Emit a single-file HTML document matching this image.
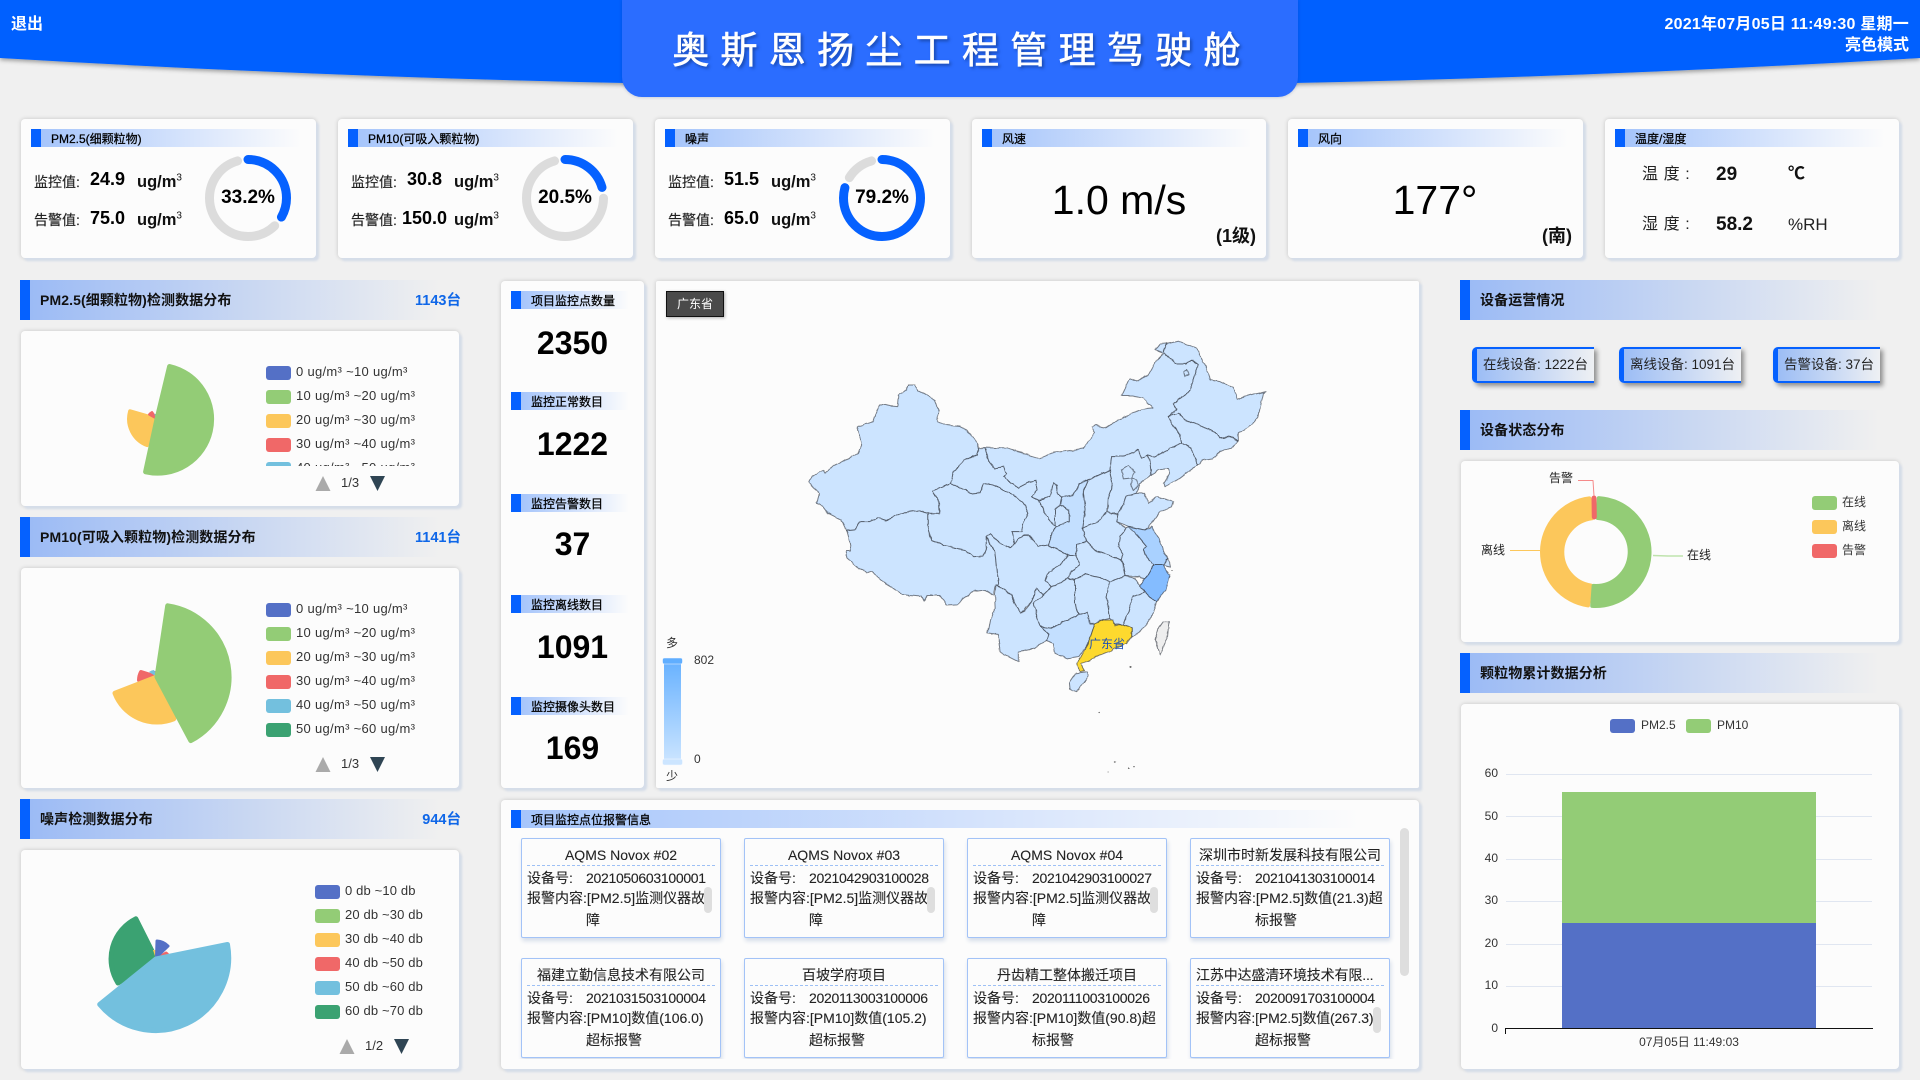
<!DOCTYPE html>
<html lang="zh">
<head>
<meta charset="utf-8">
<title>奥斯恩扬尘工程管理驾驶舱</title>
<style>
html,body{margin:0;padding:0;width:1920px;height:1080px;overflow:hidden;background:#f0f0f0}
body{position:relative;font-family:"Liberation Sans","Noto Sans CJK SC",sans-serif;color:#111}
div,span{box-sizing:border-box}
.t{position:absolute;white-space:nowrap;line-height:20px;height:20px}
.card{position:absolute;background:#fcfcfc;border-radius:4px;box-shadow:3px 3px 2px #d5dde9,0 0 4px rgba(0,0,0,.18)}
.ct{position:absolute;height:18px;border-left:10px solid #0561ff;background:linear-gradient(90deg,#a6c5fb,#fcfcfc);font-size:12px;line-height:20px;padding-left:10px;white-space:nowrap;color:#000;-webkit-text-stroke:.25px #000}
.sec{position:absolute;height:40px;width:420px;border-left:10px solid #0561ff;background:linear-gradient(90deg,#9cbbf5,#f0f0f0);font-size:14px;font-weight:bold;line-height:40px;padding-left:10px;color:#111;white-space:nowrap;letter-spacing:.1px}
.cnt{position:absolute;width:80px;text-align:right;font-size:14.5px;font-weight:bold;color:#0f67e8;line-height:42px;height:40px;white-space:nowrap}
.lb{font-size:14px;color:#222;-webkit-text-stroke:.15px #222}
.v{font-size:18px;font-weight:bold;color:#000}
.u{font-size:16.5px;font-weight:bold;color:#111}
.u sup{font-size:10px;line-height:0;font-weight:normal}
.pct{position:absolute;width:80px;text-align:center;font-size:19px;font-weight:bold;line-height:20px;color:#000}
.sw{position:absolute;width:25px;height:14px;border-radius:3px}
.lg{position:absolute;font-size:12px;line-height:14px;color:#333;white-space:nowrap}
.ls{font-size:13px;letter-spacing:.3px}
.ld{font-size:13px;letter-spacing:.15px}
.big{position:absolute;left:501px;width:143px;text-align:center;font-size:32px;font-weight:bold;line-height:36px;color:#000}
.chip{position:absolute;height:36px;top:347px;border:solid #0561ff;border-width:2px 0 2px 5px;border-radius:5px 0 0 5px;background:linear-gradient(90deg,#9cbdf5,#eef0f3);box-shadow:3px 3px 5px #8f8f8f;font-size:13.5px;line-height:32px;text-align:center;white-space:nowrap;color:#222}
.it{position:absolute;width:200px;height:100px;background:#fcfcfc;border:1px solid #a3c3f7;border-radius:2px;box-shadow:1px 3px 4px #d5dde9;font-size:14px;color:#222;-webkit-text-stroke:.1px #222}
.it .h{position:absolute;left:5px;right:5px;top:6px;height:21px;line-height:21px;text-align:center;border-bottom:1px dashed #9dc0f5;white-space:nowrap;overflow:hidden}
.it .a{position:absolute;white-space:nowrap;line-height:20px;height:20px}
.it .n{letter-spacing:-.3px}
.it .sb{position:absolute;width:8px;height:26px;left:182px;top:48px;background:#dedede;border-radius:4px}
</style>
</head>
<body>

<!-- header -->
<svg style="position:absolute;left:0;top:0" width="1920" height="110">
<defs><filter id="hs" x="-2%" y="-10%" width="104%" height="130%"><feDropShadow dx="0" dy="2" stdDeviation="2" flood-color="#000" flood-opacity=".35"/></filter></defs>
<path d="M0 0H1920V58Q960 115 0 58Z" fill="#0561ff" filter="url(#hs)"/>
</svg>
<div style="position:absolute;left:622px;top:0;width:676px;height:97px;background:#2b6dff;border-radius:0 0 20px 20px;box-shadow:0 0 3px rgba(0,40,120,.25)"></div>
<div style="position:absolute;left:622px;top:1px;width:676px;height:97px;text-align:center;font-size:37px;line-height:100px;letter-spacing:11.3px;color:#fff;text-shadow:2px 2px 3px #16429f;white-space:nowrap;padding-left:4px;-webkit-text-stroke:.6px #fff">奥斯恩扬尘工程管理驾驶舱</div>
<div class="t" style="left:11px;top:15px;font-size:16px;font-weight:bold;color:#fff">退出</div>
<div class="t" style="right:11px;top:15px;font-size:16px;font-weight:bold;color:#fff;letter-spacing:.22px">2021年07月05日 11:49:30 星期一</div>
<div class="t" style="right:11px;top:36px;font-size:16px;font-weight:bold;color:#fff">亮色模式</div>

<!-- top cards -->
<div class="card" style="left:21px;top:119px;width:295px;height:139px"></div>
<div class="card" style="left:338px;top:119px;width:295px;height:139px"></div>
<div class="card" style="left:655px;top:119px;width:295px;height:139px"></div>
<div class="card" style="left:972px;top:119px;width:294px;height:139px"></div>
<div class="card" style="left:1288px;top:119px;width:295px;height:139px"></div>
<div class="card" style="left:1605px;top:119px;width:294px;height:139px"></div>

<div class="ct" style="left:31px;top:129px;width:270px">PM2.5(细颗粒物)</div>
<div class="ct" style="left:348px;top:129px;width:270px">PM10(可吸入颗粒物)</div>
<div class="ct" style="left:665px;top:129px;width:270px">噪声</div>
<div class="ct" style="left:982px;top:129px;width:270px">风速</div>
<div class="ct" style="left:1298px;top:129px;width:270px">风向</div>
<div class="ct" style="left:1615px;top:129px;width:270px">温度/湿度</div>

<div class="t lb" style="left:34px;top:172px">监控值:</div>
<div class="t v" style="left:90px;top:169px">24.9</div>
<div class="t u" style="left:137px;top:172px">ug/m<sup>3</sup></div>
<div class="t lb" style="left:34px;top:210px">告警值:</div>
<div class="t v" style="left:90px;top:208px">75.0</div>
<div class="t u" style="left:137px;top:210px">ug/m<sup>3</sup></div>

<div class="t lb" style="left:351px;top:172px">监控值:</div>
<div class="t v" style="left:407px;top:169px">30.8</div>
<div class="t u" style="left:454px;top:172px">ug/m<sup>3</sup></div>
<div class="t lb" style="left:351px;top:210px">告警值:</div>
<div class="t v" style="left:402px;top:208px">150.0</div>
<div class="t u" style="left:454px;top:210px">ug/m<sup>3</sup></div>

<div class="t lb" style="left:668px;top:172px">监控值:</div>
<div class="t v" style="left:724px;top:169px">51.5</div>
<div class="t u" style="left:771px;top:172px">ug/m<sup>3</sup></div>
<div class="t lb" style="left:668px;top:210px">告警值:</div>
<div class="t v" style="left:724px;top:208px">65.0</div>
<div class="t u" style="left:771px;top:210px">ug/m<sup>3</sup></div>

<svg style="position:absolute;left:0;top:0" width="1000" height="270" fill="none" stroke-width="9" stroke-linecap="round">
<g transform="rotate(-90 248 198)">
<circle cx="248" cy="198" r="38.5" stroke="#dcdcdc" stroke-dasharray="139.6 300" stroke-dashoffset="-91.3"/>
<circle cx="248" cy="198" r="38.5" stroke="#0561ff" stroke-dasharray="80.3 300"/>
</g>
<g transform="rotate(-90 565 198)">
<circle cx="565" cy="198" r="38.5" stroke="#dcdcdc" stroke-dasharray="170.3 300" stroke-dashoffset="-60.6"/>
<circle cx="565" cy="198" r="38.5" stroke="#0561ff" stroke-dasharray="49.6 300"/>
</g>
<g transform="rotate(-90 882 198)">
<circle cx="882" cy="198" r="38.5" stroke="#dcdcdc" stroke-dasharray="28.3 300" stroke-dashoffset="-202.6"/>
<circle cx="882" cy="198" r="38.5" stroke="#0561ff" stroke-dasharray="191.6 300"/>
</g>
</svg>
<div class="pct" style="left:208px;top:188px">33.2%</div>
<div class="pct" style="left:525px;top:188px">20.5%</div>
<div class="pct" style="left:842px;top:188px">79.2%</div>

<div style="position:absolute;left:972px;width:294px;top:176px;text-align:center;font-size:41px;line-height:48px;color:#000">1.0 m/s</div>
<div class="t" style="right:664px;top:226px;font-size:18px;font-weight:bold">(1级)</div>
<div style="position:absolute;left:1288px;width:294px;top:176px;text-align:center;font-size:41px;line-height:48px;color:#000">177°</div>
<div class="t" style="right:348px;top:226px;font-size:18px;font-weight:bold">(南)</div>

<div class="t" style="left:1642px;top:165px;font-size:16px;letter-spacing:.6px;color:#222">温 度 :</div>
<div class="t" style="left:1716px;top:165px;font-size:19px;font-weight:bold">29</div>
<div class="t" style="left:1788px;top:164px;font-size:17px;font-weight:bold">℃</div>
<div class="t" style="left:1642px;top:215px;font-size:16px;letter-spacing:.6px;color:#222">湿 度 :</div>
<div class="t" style="left:1716px;top:215px;font-size:19px;font-weight:bold">58.2</div>
<div class="t" style="left:1788px;top:215px;font-size:17px;color:#222">%RH</div>

<!-- left column -->
<div class="sec" style="left:20px;top:280px">PM2.5(细颗粒物)检测数据分布</div>
<div class="cnt" style="left:381px;top:280px">1143台</div>
<div class="card" style="left:21px;top:331px;width:438px;height:175px"></div>

<div class="sec" style="left:20px;top:517px">PM10(可吸入颗粒物)检测数据分布</div>
<div class="cnt" style="left:381px;top:517px">1141台</div>
<div class="card" style="left:21px;top:568px;width:438px;height:220px"></div>

<div class="sec" style="left:20px;top:799px">噪声检测数据分布</div>
<div class="cnt" style="left:381px;top:799px">944台</div>
<div class="card" style="left:21px;top:850px;width:438px;height:219px"></div>

<svg style="position:absolute;left:0;top:330px" width="470" height="750" viewBox="0 330 470 750" stroke-linejoin="round">
<!-- pie 1 -->
<path d="M157 419L147 445A28 28 0 0 1 130.1 411.3Z" fill="#fcc75b" stroke="#fcc75b" stroke-width="4"/>
<path d="M157 419L149 414.5A9 9 0 0 1 152 412Z" fill="#f06868" stroke="#f06868" stroke-width="2"/>
<path d="M157 419L154 414L157 414Z" fill="#8fa0c8"/>
<path d="M157 419L169.6 366.5A54 54 0 0 1 145.6 471.8Z" fill="#93cc76" stroke="#93cc76" stroke-width="5"/>
<!-- pie 2 -->
<path d="M157 677L139 680A18 18 0 0 1 141 672Z" fill="#f06868" stroke="#f06868" stroke-width="4"/>
<path d="M157 677L149 672A10 10 0 0 1 154 670Z" fill="#73c0de"/>
<path d="M157 677L154 671L157 671Z" fill="#8fa0c8"/>
<path d="M157 677L173.8 718.8A45 45 0 0 1 115 693.2Z" fill="#fcc75b" stroke="#fcc75b" stroke-width="5"/>
<path d="M157 677L167.7 605.8A72 72 0 0 1 190.8 740.6Z" fill="#93cc76" stroke="#93cc76" stroke-width="5"/>
<!-- pie 3 -->
<path d="M156 959L118 983A45 45 0 0 1 135.8 918.8Z" fill="#3ba272" stroke="#3ba272" stroke-width="5"/>
<path d="M156 959L153 950L156 950Z" fill="#fcc75b"/>
<path d="M156 959L166 953A10 10 0 0 1 168 955Z" fill="#f06868" stroke="#f06868" stroke-width="3"/>
<path d="M156.5 957L157 941A17 17 0 0 1 168 946Z" fill="#5470c6" stroke="#5470c6" stroke-width="3"/>
<path d="M156 959L227.5 944.5A73 73 0 0 1 99.7 1004.4Z" fill="#73c0de" stroke="#73c0de" stroke-width="5"/>
<!-- pagers -->
<path d="M323 476L330.5 491H315.5Z" fill="#aaa"/><path d="M370 476H385L377.5 491Z" fill="#2f4554"/>
<path d="M323 757L330.5 772H315.5Z" fill="#aaa"/><path d="M370 757H385L377.5 772Z" fill="#2f4554"/>
<path d="M347 1039L354.5 1054H339.5Z" fill="#aaa"/><path d="M394 1039H409L401.5 1054Z" fill="#2f4554"/>
</svg>

<!-- legend 1 (clipped) -->
<div style="position:absolute;left:266px;top:366px;width:170px;height:100px;overflow:hidden">
<div class="sw" style="left:0;top:0;background:#5470c6"></div><div class="lg ls" style="left:30px;top:-1px">0 ug/m³ ~10 ug/m³</div>
<div class="sw" style="left:0;top:24px;background:#93cc76"></div><div class="lg ls" style="left:30px;top:23px">10 ug/m³ ~20 ug/m³</div>
<div class="sw" style="left:0;top:48px;background:#fcc75b"></div><div class="lg ls" style="left:30px;top:47px">20 ug/m³ ~30 ug/m³</div>
<div class="sw" style="left:0;top:72px;background:#f06868"></div><div class="lg ls" style="left:30px;top:71px">30 ug/m³ ~40 ug/m³</div>
<div class="sw" style="left:0;top:96px;background:#73c0de"></div><div class="lg ls" style="left:30px;top:95px">40 ug/m³ ~50 ug/m³</div>
</div>
<div class="lg" style="left:341px;top:476px;font-size:13px">1/3</div>

<!-- legend 2 -->
<div style="position:absolute;left:266px;top:603px;width:170px;height:140px">
<div class="sw" style="left:0;top:0;background:#5470c6"></div><div class="lg ls" style="left:30px;top:-1px">0 ug/m³ ~10 ug/m³</div>
<div class="sw" style="left:0;top:24px;background:#93cc76"></div><div class="lg ls" style="left:30px;top:23px">10 ug/m³ ~20 ug/m³</div>
<div class="sw" style="left:0;top:48px;background:#fcc75b"></div><div class="lg ls" style="left:30px;top:47px">20 ug/m³ ~30 ug/m³</div>
<div class="sw" style="left:0;top:72px;background:#f06868"></div><div class="lg ls" style="left:30px;top:71px">30 ug/m³ ~40 ug/m³</div>
<div class="sw" style="left:0;top:96px;background:#73c0de"></div><div class="lg ls" style="left:30px;top:95px">40 ug/m³ ~50 ug/m³</div>
<div class="sw" style="left:0;top:120px;background:#3ba272"></div><div class="lg ls" style="left:30px;top:119px">50 ug/m³ ~60 ug/m³</div>
</div>
<div class="lg" style="left:341px;top:757px;font-size:13px">1/3</div>

<!-- legend 3 -->
<div style="position:absolute;left:315px;top:885px;width:130px;height:140px">
<div class="sw" style="left:0;top:0;background:#5470c6"></div><div class="lg ld" style="left:30px;top:-1px">0 db ~10 db</div>
<div class="sw" style="left:0;top:24px;background:#93cc76"></div><div class="lg ld" style="left:30px;top:23px">20 db ~30 db</div>
<div class="sw" style="left:0;top:48px;background:#fcc75b"></div><div class="lg ld" style="left:30px;top:47px">30 db ~40 db</div>
<div class="sw" style="left:0;top:72px;background:#f06868"></div><div class="lg ld" style="left:30px;top:71px">40 db ~50 db</div>
<div class="sw" style="left:0;top:96px;background:#73c0de"></div><div class="lg ld" style="left:30px;top:95px">50 db ~60 db</div>
<div class="sw" style="left:0;top:120px;background:#3ba272"></div><div class="lg ld" style="left:30px;top:119px">60 db ~70 db</div>
</div>
<div class="lg" style="left:365px;top:1039px;font-size:13px">1/2</div>

<!-- stats column -->
<div class="card" style="left:501px;top:281px;width:143px;height:507px"></div>
<div class="ct" style="left:511px;top:291px;width:118px">项目监控点数量</div>
<div class="big" style="top:325px">2350</div>
<div class="ct" style="left:511px;top:392px;width:118px">监控正常数目</div>
<div class="big" style="top:426px">1222</div>
<div class="ct" style="left:511px;top:494px;width:118px">监控告警数目</div>
<div class="big" style="top:526px">37</div>
<div class="ct" style="left:511px;top:595px;width:118px">监控离线数目</div>
<div class="big" style="top:629px">1091</div>
<div class="ct" style="left:511px;top:697px;width:118px">监控摄像头数目</div>
<div class="big" style="top:730px">169</div>

<!-- map -->
<div class="card" style="left:656px;top:281px;width:763px;height:507px;border-radius:2px"></div>
<svg style="position:absolute;left:656px;top:281px" width="763" height="507" viewBox="656 281 763 507">
<defs>
<filter id="wob" x="-3%" y="-3%" width="106%" height="106%" color-interpolation-filters="sRGB">
<feTurbulence type="fractalNoise" baseFrequency=".13" numOctaves="2" seed="4" result="n"/>
<feDisplacementMap in="SourceGraphic" in2="n" scale="3.2" xChannelSelector="R" yChannelSelector="G"/>
<feGaussianBlur stdDeviation=".22"/>
</filter>
<linearGradient id="vm" x1="0" y1="0" x2="0" y2="1"><stop offset="0" stop-color="#65b0ff"/><stop offset="1" stop-color="#cce5ff"/></linearGradient>
</defs>
<g filter="url(#wob)">
<g transform="translate(790 320) scale(.33333)" fill="#cce4ff" stroke="rgba(45,50,60,.62)" stroke-width="3" stroke-linejoin="round">
<!-- Xinjiang -->
<polygon points="58,485 65,470 85,458 103,450 108,458 125,440 150,430 180,412 205,400 215,375 208,345 200,320 225,313 250,305 258,280 270,252 300,258 322,260 325,225 350,210 355,195 375,195 385,212 410,225 435,240 445,270 442,305 470,315 510,320 530,330 548,350 567,383 560,405 525,420 505,440 490,460 480,490 428,512 445,540 448,580 415,580 385,572 340,578 310,590 285,603 262,595 240,605 208,605 195,630 170,632 155,600 115,580 100,560 80,548 88,520 70,505"/>
<!-- Tibet -->
<polygon points="170,632 195,630 208,605 240,605 262,595 285,603 310,590 340,578 385,572 415,580 415,630 425,660 470,678 525,690 550,710 580,708 590,680 590,650 615,700 625,795 615,800 610,825 585,810 550,815 520,835 500,853 470,855 450,825 410,825 402,843 395,828 360,825 335,822 305,800 280,785 245,755 230,760 195,735 172,715 168,690 183,690 178,660"/>
<!-- Qinghai -->
<polygon points="428,512 480,490 510,505 545,520 570,518 580,490 610,495 650,515 680,530 705,555 715,580 700,610 695,635 665,635 675,670 660,685 620,660 600,640 590,650 590,680 580,708 550,710 525,690 470,678 425,660 415,630 415,580 448,580 445,540"/>
<!-- Gansu -->
<polygon points="567,383 585,383 600,430 612,445 640,440 650,460 640,470 665,490 685,503 710,490 735,482 740,510 725,530 745,540 760,565 775,600 795,615 795,565 810,555 838,570 838,605 795,620 775,675 745,680 715,645 700,645 675,670 665,635 695,635 700,610 715,580 705,555 680,530 650,515 610,495 580,490 570,518 545,520 510,505 480,490 490,460 505,440 525,420 560,405"/>
<!-- Ningxia -->
<polygon points="745,540 780,530 790,488 802,495 800,520 815,533 810,555 795,565 795,615 775,600 760,565"/>
<!-- Inner Mongolia -->
<polygon points="585,383 650,385 700,400 750,415 790,398 830,393 880,385 915,340 905,320 920,315 945,325 1000,290 1060,268 1090,265 1060,235 1030,228 995,228 1020,175 1040,183 1075,165 1100,120 1120,100 1095,90 1110,72 1130,70 1120,95 1155,130 1190,130 1205,120 1225,135 1215,165 1205,195 1195,220 1150,250 1160,270 1135,290 1170,345 1175,368 1095,410 1075,405 1055,415 1045,390 1000,410 965,410 960,450 895,480 870,490 850,525 815,533 800,520 802,495 790,488 780,530 745,540 725,530 740,510 735,482 710,490 685,503 665,490 640,470 650,460 640,440 612,445 600,430"/>
<!-- Heilongjiang -->
<polygon points="1130,70 1120,95 1155,130 1190,130 1205,120 1225,135 1215,165 1205,195 1195,220 1150,250 1160,270 1135,290 1165,280 1185,300 1240,320 1280,340 1290,355 1330,350 1345,365 1345,340 1385,315 1405,290 1420,220 1428,215 1385,225 1340,238 1330,205 1290,185 1262,180 1245,135 1220,85 1165,62"/>
<polygon points="1180,155 1190,150 1195,165 1185,170" fill="#cce4ff"/>
<!-- Jilin -->
<polygon points="1175,368 1170,345 1135,290 1165,280 1185,300 1240,320 1280,340 1290,355 1330,350 1345,365 1320,385 1290,395 1270,415 1240,420 1222,435 1205,385"/>
<!-- Liaoning -->
<polygon points="1075,405 1095,410 1175,368 1205,385 1222,435 1170,475 1125,500 1120,490 1140,460 1135,445 1105,450 1085,465"/>
<!-- Hebei -->
<polygon points="960,450 965,410 1000,410 1045,390 1055,415 1075,405 1085,465 1050,490 1040,520 1010,530 985,585 955,575 955,530 968,490"/>
<!-- Beijing / Tianjin -->
<polygon points="995,450 1015,437 1035,455 1025,475 1000,478"/>
<polygon points="1025,475 1040,480 1045,495 1030,510 1022,492"/>
<!-- Shanxi -->
<polygon points="895,480 960,450 968,490 955,530 952,575 925,605 878,625 885,570 880,515"/>
<!-- Shaanxi -->
<polygon fill="#c3dfff" points="895,480 880,515 885,570 878,625 890,665 860,672 858,705 835,705 775,675 795,620 838,605 838,570 810,555 815,533 850,525 870,490"/>
<!-- Shandong -->
<polygon points="985,585 1010,530 1040,520 1065,520 1075,550 1100,530 1150,545 1145,560 1110,575 1085,610 1065,630 1020,620 980,605"/>
<!-- Henan -->
<polygon points="878,625 925,605 952,575 985,585 980,605 1010,625 990,650 985,680 1000,705 995,720 955,705 920,695 890,665"/>
<!-- Anhui -->
<polygon points="1010,625 1020,620 1045,650 1070,680 1060,690 1070,712 1090,735 1065,778 1050,770 1005,768 995,720 1000,705 985,680 990,650"/>
<!-- Jiangsu -->
<polygon fill="#a9d1ff" points="1015,620 1065,630 1085,620 1110,665 1125,700 1135,715 1120,735 1090,735 1070,712 1060,690 1070,680 1045,650"/>
<!-- Shanghai -->
<polygon points="1120,735 1135,715 1140,740"/>
<!-- Zhejiang -->
<polygon fill="#84bcff" points="1065,778 1090,735 1118,735 1140,765 1125,810 1100,845 1090,840 1065,815 1050,800"/>
<!-- Hubei -->
<polygon points="858,705 860,672 890,665 920,695 955,705 995,720 1005,768 960,785 940,775 885,763 855,780 835,775 840,755 870,735"/>
<!-- Chongqing -->
<polygon points="835,705 858,705 870,735 840,755 835,775 810,790 785,800 765,780 775,755 810,735"/>
<!-- Sichuan -->
<polygon points="590,650 600,640 620,660 660,685 675,670 700,645 715,645 745,680 775,675 835,705 810,735 775,755 765,780 785,800 760,825 740,805 725,845 690,880 665,825 635,805 618,795 625,795 615,700"/>
<!-- Yunnan -->
<polygon points="618,795 635,805 665,825 690,880 710,865 725,845 740,805 760,825 730,850 750,920 780,945 770,963 730,985 685,995 685,1025 655,1010 630,995 625,945 592,940 600,900 617,865 615,820"/>
<!-- Guizhou -->
<polygon points="730,850 760,825 785,800 810,790 835,775 855,780 855,815 855,850 865,885 820,905 785,925 750,920"/>
<!-- Guangxi -->
<polygon fill="#c3dfff" points="750,920 785,925 820,905 865,885 895,875 900,910 915,910 895,970 865,1010 830,1015 795,1000 790,970 770,963 780,945"/>
<!-- Hunan -->
<polygon points="855,780 885,763 940,775 960,785 950,830 960,895 940,900 915,910 900,910 895,875 865,885 855,850 855,815"/>
<!-- Jiangxi -->
<polygon points="960,785 1005,768 1035,775 1050,800 1065,815 1030,830 1015,875 1000,915 975,915 960,895 950,830"/>
<!-- Fujian -->
<polygon points="1065,815 1090,840 1100,845 1085,890 1055,930 1025,950 1025,925 1000,915 1015,875 1030,830"/>
<!-- Guangdong -->
<polygon fill="#fdd92e" points="915,910 940,900 970,900 975,918 1000,915 1025,925 1025,950 1010,970 955,995 930,1005 890,1025 875,1030 882,1052 868,1055 862,1030 875,1005 895,970"/>
<!-- Hainan -->
<polygon points="855,1060 890,1055 895,1070 860,1115 840,1108 838,1085"/>
<!-- Taiwan -->
<polygon fill="#eeeeee" points="1120,905 1137,905 1132,955 1110,1005 1095,960 1105,925"/>
<g fill="#555" stroke="none">
<circle cx="1022" cy="1040" r="3"/><circle cx="926" cy="1179" r="2"/><circle cx="975" cy="1326" r="2"/><circle cx="1015" cy="1346" r="2.5"/><circle cx="1032" cy="1337" r="2"/><circle cx="955" cy="1356" r="2"/><circle cx="1145" cy="751" r="2"/>
</g>
</g>
</g>
<!-- visualmap -->
<rect x="664" y="658" width="17" height="105" fill="url(#vm)"/>
<rect x="662.5" y="658" width="20" height="6" rx="2" fill="#60aeff" stroke="#f4f8ff" stroke-width=".6"/>
<rect x="662.5" y="759" width="20" height="6" rx="2" fill="#cce5ff" stroke="#f4f8ff" stroke-width=".6"/>
</svg>
<div class="t" style="left:666px;top:633px;font-size:12px;color:#333">多</div>
<div class="t" style="left:666px;top:766px;font-size:12px;color:#333">少</div>
<div class="t" style="left:694px;top:650px;font-size:12px;color:#333">802</div>
<div class="t" style="left:694px;top:749px;font-size:12px;color:#333">0</div>
<div class="t" style="left:1089px;top:634px;font-size:12px;color:#1e50b4">广东省</div>
<div style="position:absolute;left:666px;top:291px;width:58px;height:26px;background:#4a4a4a;border:1px solid #111;box-shadow:1px 1px 3px rgba(0,0,0,.3);color:#fff;font-size:12px;line-height:25px;text-align:center">广东省</div>

<!-- alerts -->
<div class="card" style="left:501px;top:800px;width:918px;height:269px"></div>
<div class="ct" style="left:511px;top:810px;width:850px;font-size:12px">项目监控点位报警信息</div>
<div style="position:absolute;left:1400px;top:828px;width:9px;height:148px;background:#dedede;border-radius:5px"></div>
<div style="position:absolute;left:511px;top:830px;width:889px;height:229px;overflow:hidden">
  <div class="it" style="left:10px;top:8px"><div class="h">AQMS Novox #02</div><span class="a" style="left:5px;top:29px">设备号:</span><span class="a n" style="left:64px;top:29px">2021050603100001</span><span class="a" style="left:5px;top:49px">报警内容:[PM2.5]监测仪器故</span><span class="a" style="left:64px;top:71px">障</span><div class="sb"></div></div>
  <div class="it" style="left:233px;top:8px"><div class="h">AQMS Novox #03</div><span class="a" style="left:5px;top:29px">设备号:</span><span class="a n" style="left:64px;top:29px">2021042903100028</span><span class="a" style="left:5px;top:49px">报警内容:[PM2.5]监测仪器故</span><span class="a" style="left:64px;top:71px">障</span><div class="sb"></div></div>
  <div class="it" style="left:456px;top:8px"><div class="h">AQMS Novox #04</div><span class="a" style="left:5px;top:29px">设备号:</span><span class="a n" style="left:64px;top:29px">2021042903100027</span><span class="a" style="left:5px;top:49px">报警内容:[PM2.5]监测仪器故</span><span class="a" style="left:64px;top:71px">障</span><div class="sb"></div></div>
  <div class="it" style="left:679px;top:8px"><div class="h">深圳市时新发展科技有限公司</div><span class="a" style="left:5px;top:29px">设备号:</span><span class="a n" style="left:64px;top:29px">2021041303100014</span><span class="a" style="left:5px;top:49px">报警内容:[PM2.5]数值(21.3)超</span><span class="a" style="left:64px;top:71px">标报警</span></div>
  <div class="it" style="left:10px;top:128px"><div class="h">福建立勤信息技术有限公司</div><span class="a" style="left:5px;top:29px">设备号:</span><span class="a n" style="left:64px;top:29px">2021031503100004</span><span class="a" style="left:5px;top:49px">报警内容:[PM10]数值(106.0)</span><span class="a" style="left:64px;top:71px">超标报警</span></div>
  <div class="it" style="left:233px;top:128px"><div class="h">百坡学府项目</div><span class="a" style="left:5px;top:29px">设备号:</span><span class="a n" style="left:64px;top:29px">2020113003100006</span><span class="a" style="left:5px;top:49px">报警内容:[PM10]数值(105.2)</span><span class="a" style="left:64px;top:71px">超标报警</span></div>
  <div class="it" style="left:456px;top:128px"><div class="h">丹齿精工整体搬迁项目</div><span class="a" style="left:5px;top:29px">设备号:</span><span class="a n" style="left:64px;top:29px">2020111003100026</span><span class="a" style="left:5px;top:49px">报警内容:[PM10]数值(90.8)超</span><span class="a" style="left:64px;top:71px">标报警</span></div>
  <div class="it" style="left:679px;top:128px"><div class="h" style="text-align:left;letter-spacing:-.15px">江苏中达盛清环境技术有限...</div><span class="a" style="left:5px;top:29px">设备号:</span><span class="a n" style="left:64px;top:29px">2020091703100004</span><span class="a" style="left:5px;top:49px;letter-spacing:-.15px">报警内容:[PM2.5]数值(267.3)</span><span class="a" style="left:64px;top:71px">超标报警</span><div class="sb"></div></div>
</div>

<!-- right column -->
<div class="sec" style="left:1460px;top:280px">设备运营情况</div>
<div class="chip" style="left:1472px;width:122px">在线设备: 1222台</div>
<div class="chip" style="left:1619px;width:122px">离线设备: 1091台</div>
<div class="chip" style="left:1773px;width:107px">告警设备: 37台</div>

<div class="sec" style="left:1460px;top:410px">设备状态分布</div>
<div class="card" style="left:1461px;top:461px;width:438px;height:181px"></div>
<svg style="position:absolute;left:1461px;top:461px" width="438" height="181" viewBox="1461 461 438 181" stroke-linejoin="round">
<path d="M1588 605.4A54 54 0 0 1 1589.4 498.4L1591.9 518.3A34 34 0 0 0 1591 585.6Z" fill="#fcc75b" stroke="#fcc75b" stroke-width="4"/>
<path d="M1598.8 498.1A54 54 0 1 1 1592.2 605.9L1593.6 585.9A34 34 0 0 0 1597.8 518Z" fill="#93cc76" stroke="#93cc76" stroke-width="4"/>
<path d="M1594 498L1594.3 517" stroke="#f06868" stroke-width="5" stroke-linecap="round" fill="none"/>
<path d="M1578 480.5H1593L1594 496" stroke="#f58a8a" stroke-width="1" fill="none"/>
<path d="M1510 550.5H1540" stroke="#fcc75b" stroke-width="1" fill="none"/>
<path d="M1653 555.5L1668 556H1683" stroke="#bfe3ad" stroke-width="1.4" fill="none"/>
</svg>
<div class="lg" style="left:1549px;top:471px;color:#222">告警</div>
<div class="lg" style="left:1481px;top:543px;color:#222">离线</div>
<div class="lg" style="left:1687px;top:548px;color:#222">在线</div>
<div class="sw" style="left:1812px;top:496px;background:#93cc76"></div><div class="lg" style="left:1842px;top:495px">在线</div>
<div class="sw" style="left:1812px;top:520px;background:#fcc75b"></div><div class="lg" style="left:1842px;top:519px">离线</div>
<div class="sw" style="left:1812px;top:544px;background:#f06868"></div><div class="lg" style="left:1842px;top:543px">告警</div>

<div class="sec" style="left:1460px;top:653px">颗粒物累计数据分析</div>
<div class="card" style="left:1461px;top:704px;width:438px;height:365px"></div>
<div class="sw" style="left:1610px;top:719px;background:#5470c6"></div><div class="lg" style="left:1641px;top:718px">PM2.5</div>
<div class="sw" style="left:1686px;top:719px;background:#93cc76"></div><div class="lg" style="left:1717px;top:718px">PM10</div>
<svg style="position:absolute;left:1461px;top:704px" width="438" height="365" viewBox="1461 704 438 365">
<g stroke="#e0e6f1" stroke-width="1">
<path d="M1506 774.5H1872M1506 816.5H1872M1506 859.5H1872M1506 901.5H1872M1506 944.5H1872M1506 986.5H1872"/>
</g>
<rect x="1562" y="792" width="254" height="131" fill="#93cc76"/>
<rect x="1562" y="923" width="254" height="105" fill="#5470c6"/>
<path d="M1505.5 1034V1028.5H1873" stroke="#111" stroke-width="1" fill="none"/>
<g font-family="Liberation Sans,Noto Sans CJK SC,sans-serif" font-size="12" fill="#333" text-anchor="end">
<text x="1498" y="777">60</text><text x="1498" y="820">50</text><text x="1498" y="862">40</text><text x="1498" y="904">30</text><text x="1498" y="947">20</text><text x="1498" y="989">10</text><text x="1498" y="1032">0</text>
</g>
<text x="1689" y="1046" font-family="Liberation Sans,Noto Sans CJK SC,sans-serif" font-size="12" fill="#333" text-anchor="middle">07月05日 11:49:03</text>
</svg>

</body>
</html>
